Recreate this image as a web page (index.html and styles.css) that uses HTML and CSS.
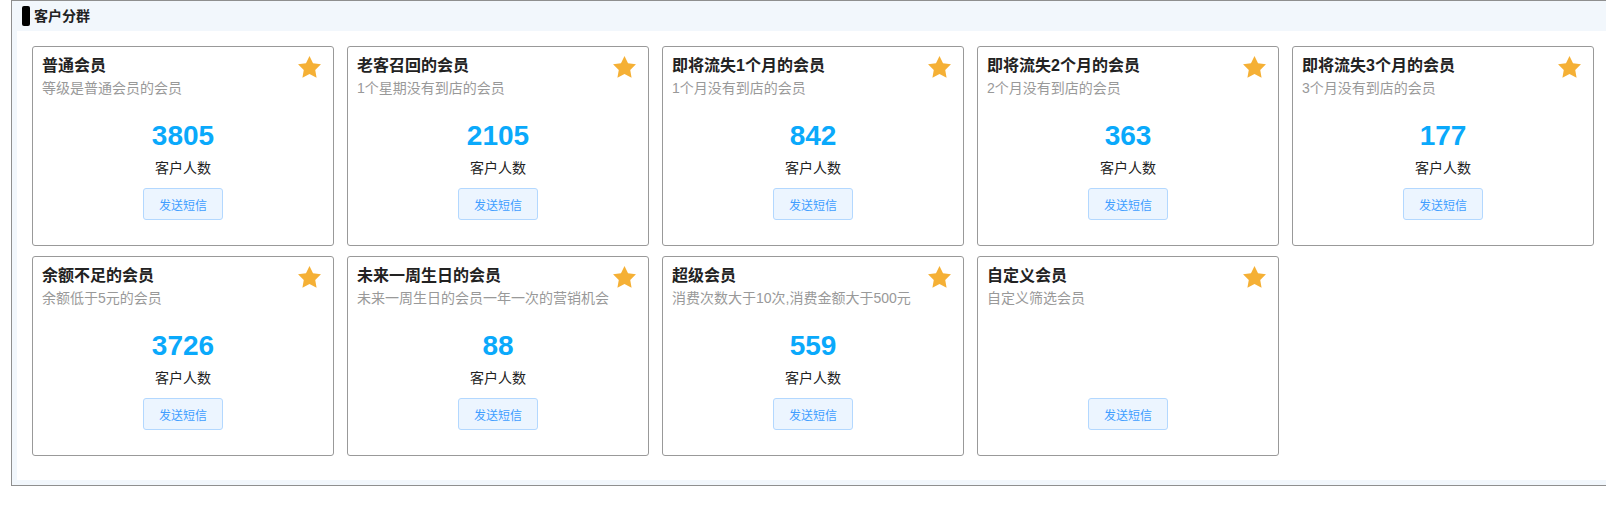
FILE: index.html
```html
<!DOCTYPE html>
<html lang="zh-cn">
	<head>
		<meta http-equiv="Content-Type" content="text/html; charset=utf-8" />
		<title>客户分群</title>
		<link rel="stylesheet" href="styles.css">
	</head>

	<body>
		<div class="panel">
			<div class="panelHead">
				<i class="headMark"></i>
				<span class="headTitle">客户分群</span>
			</div>
			<div class="panelBody">
				<ul class="groupList">
					<li class="groupCard">
						<div class="cardHead">
							<div>
								<h3>普通会员</h3>
								<p>等级是普通会员的会员</p>
							</div>
							<svg class="star" viewBox="2 2 20 19.2"><path d="M12 2l3.09 6.26L22 9.27l-5 4.87 1.18 6.88L12 17.77l-6.18 3.25L7 14.14 2 9.27l6.91-1.01L12 2z"/></svg>
						</div>
						<div class="count">3805</div>
						<div class="countLabel">客户人数</div>
						<button class="smsBtn">发送短信</button>
					</li>
					<li class="groupCard">
						<div class="cardHead">
							<div>
								<h3>老客召回的会员</h3>
								<p>1个星期没有到店的会员</p>
							</div>
							<svg class="star" viewBox="2 2 20 19.2"><path d="M12 2l3.09 6.26L22 9.27l-5 4.87 1.18 6.88L12 17.77l-6.18 3.25L7 14.14 2 9.27l6.91-1.01L12 2z"/></svg>
						</div>
						<div class="count">2105</div>
						<div class="countLabel">客户人数</div>
						<button class="smsBtn">发送短信</button>
					</li>
					<li class="groupCard">
						<div class="cardHead">
							<div>
								<h3>即将流失1个月的会员</h3>
								<p>1个月没有到店的会员</p>
							</div>
							<svg class="star" viewBox="2 2 20 19.2"><path d="M12 2l3.09 6.26L22 9.27l-5 4.87 1.18 6.88L12 17.77l-6.18 3.25L7 14.14 2 9.27l6.91-1.01L12 2z"/></svg>
						</div>
						<div class="count">842</div>
						<div class="countLabel">客户人数</div>
						<button class="smsBtn">发送短信</button>
					</li>
					<li class="groupCard">
						<div class="cardHead">
							<div>
								<h3>即将流失2个月的会员</h3>
								<p>2个月没有到店的会员</p>
							</div>
							<svg class="star" viewBox="2 2 20 19.2"><path d="M12 2l3.09 6.26L22 9.27l-5 4.87 1.18 6.88L12 17.77l-6.18 3.25L7 14.14 2 9.27l6.91-1.01L12 2z"/></svg>
						</div>
						<div class="count">363</div>
						<div class="countLabel">客户人数</div>
						<button class="smsBtn">发送短信</button>
					</li>
					<li class="groupCard">
						<div class="cardHead">
							<div>
								<h3>即将流失3个月的会员</h3>
								<p>3个月没有到店的会员</p>
							</div>
							<svg class="star" viewBox="2 2 20 19.2"><path d="M12 2l3.09 6.26L22 9.27l-5 4.87 1.18 6.88L12 17.77l-6.18 3.25L7 14.14 2 9.27l6.91-1.01L12 2z"/></svg>
						</div>
						<div class="count">177</div>
						<div class="countLabel">客户人数</div>
						<button class="smsBtn">发送短信</button>
					</li>
					<li class="groupCard">
						<div class="cardHead">
							<div>
								<h3>余额不足的会员</h3>
								<p>余额低于5元的会员</p>
							</div>
							<svg class="star" viewBox="2 2 20 19.2"><path d="M12 2l3.09 6.26L22 9.27l-5 4.87 1.18 6.88L12 17.77l-6.18 3.25L7 14.14 2 9.27l6.91-1.01L12 2z"/></svg>
						</div>
						<div class="count">3726</div>
						<div class="countLabel">客户人数</div>
						<button class="smsBtn">发送短信</button>
					</li>
					<li class="groupCard">
						<div class="cardHead">
							<div>
								<h3>未来一周生日的会员</h3>
								<p>未来一周生日的会员一年一次的营销机会</p>
							</div>
							<svg class="star" viewBox="2 2 20 19.2"><path d="M12 2l3.09 6.26L22 9.27l-5 4.87 1.18 6.88L12 17.77l-6.18 3.25L7 14.14 2 9.27l6.91-1.01L12 2z"/></svg>
						</div>
						<div class="count">88</div>
						<div class="countLabel">客户人数</div>
						<button class="smsBtn">发送短信</button>
					</li>
					<li class="groupCard">
						<div class="cardHead">
							<div>
								<h3>超级会员</h3>
								<p>消费次数大于10次,消费金额大于500元</p>
							</div>
							<svg class="star" viewBox="2 2 20 19.2"><path d="M12 2l3.09 6.26L22 9.27l-5 4.87 1.18 6.88L12 17.77l-6.18 3.25L7 14.14 2 9.27l6.91-1.01L12 2z"/></svg>
						</div>
						<div class="count">559</div>
						<div class="countLabel">客户人数</div>
						<button class="smsBtn">发送短信</button>
					</li>
					<li class="groupCard">
						<div class="cardHead">
							<div>
								<h3>自定义会员</h3>
								<p>自定义筛选会员</p>
							</div>
							<svg class="star" viewBox="2 2 20 19.2"><path d="M12 2l3.09 6.26L22 9.27l-5 4.87 1.18 6.88L12 17.77l-6.18 3.25L7 14.14 2 9.27l6.91-1.01L12 2z"/></svg>
						</div>
						<!-- 自定义分组没有人数，留出位置 -->
						<div class="count"></div>
						<div class="countLabel"></div>
						<button class="smsBtn">发送短信</button>
					</li>
				</ul>
			</div>
		</div>
	</body>
</html>
```

FILE: styles.css
```css
*{
	padding:0;
	margin:0;
	list-style: none;
	box-sizing: border-box;
}
html, body {
	overflow: hidden;
}
body {
	font-family: "Liberation Sans", "Noto Sans CJK SC", sans-serif;
	color: #333;
	background-color: #fff;
}
.panel {
	width: max-content;
	margin-left: 11px;
	border: 1px solid #8f8f8f;
	background-color: #f2f7fc;
	padding: 0 5px 5px;
}
.panelHead {
	height: 30px;
	display: flex;
	align-items: center;
	padding-left: 5px;
}
.headMark {
	width: 8px;
	height: 20px;
	border-radius: 2px;
	background-color: #000;
	margin-right: 4px;
}
.headTitle {
	font-size: 14px;
	font-weight: bold;
	color: #222;
	line-height: 20px;
}
.panelBody {
	background-color: #fff;
	padding: 15px 15px 24px;
}
.groupList {
	display: grid;
	grid-template-columns: repeat(5, 302px);
	gap: 10px 13px;
}
.groupCard {
	height: 200px;
	border: 1px solid #999;
	border-radius: 3px;
	padding: 8px 9px 0;
	text-align: center;
}
.cardHead {
	display: flex;
	justify-content: space-between;
	align-items: flex-start;
	text-align: left;
}
.cardHead h3 {
	font-size: 16px;
	line-height: 22px;
	color: #222;
}
.cardHead p {
	font-size: 14px;
	line-height: 20px;
	color: #999;
	margin-top: 1px;
}
.star {
	width: 23px;
	height: 22px;
	margin: 1px 3px 0 0;
	fill: #f5b035;
	flex-shrink: 0;
}
.count {
	height: 36px;
	line-height: 36px;
	margin-top: 20px;
	font-size: 28px;
	font-weight: bold;
	color: #0aa9fb;
}
.countLabel {
	height: 20px;
	line-height: 20px;
	margin-top: 4px;
	font-size: 14px;
	color: #222;
}
.smsBtn {
	margin-top: 10px;
	height: 32px;
	padding: 0 15px;
	font-family: inherit;
	font-size: 12px;
	color: #409eff;
	background-color: #ecf5ff;
	border: 1px solid #b3d8ff;
	border-radius: 3px;
	cursor: pointer;
}
```
